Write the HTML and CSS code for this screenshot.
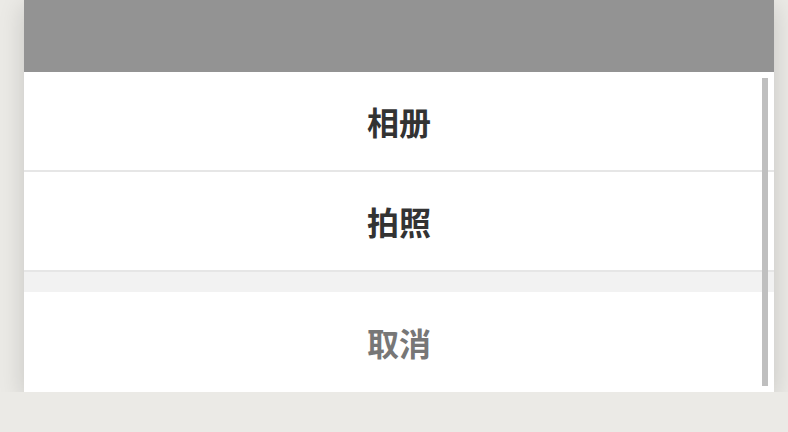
FILE: index.html
```html
<!DOCTYPE html>
<html lang="zh-CN">

<head>
    <meta charset="UTF-8">
    <meta name="viewport" content="width=device-width, initial-scale=1.0">
    <title>选择图片</title>
    <link rel="stylesheet" href="styles.css">
</head>

<body>
    <div class="page">
        <div class="sheet">
            <div class="mask"></div>
            <div class="actions">
                <div class="action">相册</div>
                <div class="action">拍照</div>
            </div>
            <div class="action cancel">取消</div>
            <div class="scrollbar"></div>
        </div>
    </div>
</body>

</html>
```

FILE: styles.css
```css
body {
    margin: 0;
    padding: 0;
    background-color: #ebeae6;
    font-family: "Noto Sans CJK SC", "Noto Sans", sans-serif;
}

.page {
    padding: 0 14px 0 24px;
}

.sheet {
    position: relative;
    background-color: #fff;
    box-shadow: 0 6px 24px rgba(0, 0, 0, 0.16);
}

.mask {
    height: 72px;
    background-color: #939393;
}

.actions {
    border-bottom: 20px solid #f2f2f2;
}

.action {
    height: 100px;
    display: flex;
    align-items: center;
    justify-content: center;
    font-size: 32px;
    font-weight: bold;
    color: #333;
    border-bottom: 2px solid #e6e6e6;
    box-sizing: border-box;
}

.action.cancel {
    border-bottom: none;
    color: #777;
}

.scrollbar {
    position: absolute;
    top: 78px;
    right: 6px;
    bottom: 6px;
    width: 6px;
    background-color: #bfbfbf;
}
```
